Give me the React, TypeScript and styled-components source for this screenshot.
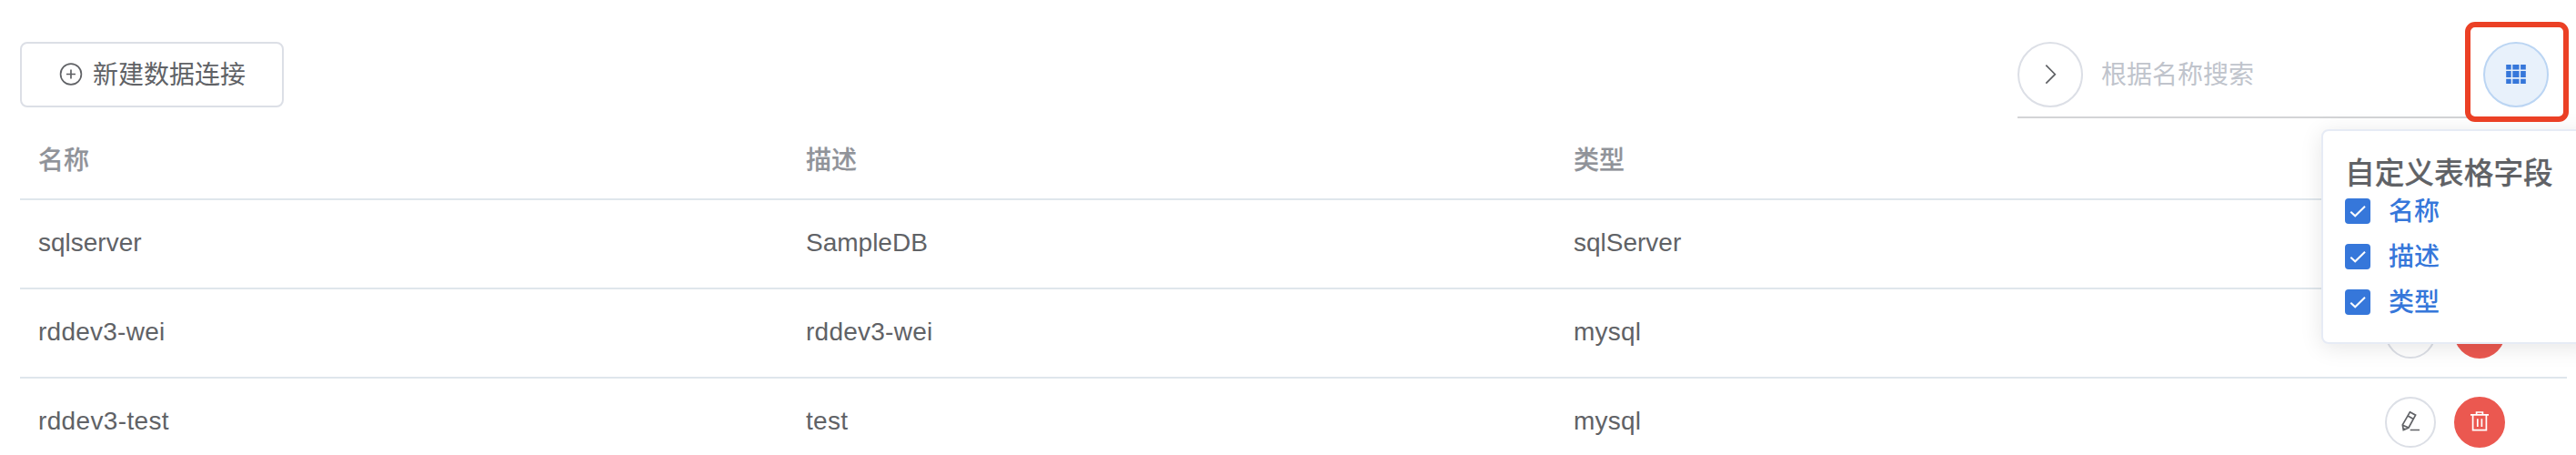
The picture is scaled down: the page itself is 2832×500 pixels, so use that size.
import React from 'react';
import styled, { createGlobalStyle } from 'styled-components';

const GlobalStyle = createGlobalStyle`
  * { box-sizing: border-box; }
  html, body { margin: 0; padding: 0; }
  body {
    height: 500px;
    overflow: hidden;
    background: #fff;
    color: #606266;
    font-family: "Liberation Sans", "Noto Sans CJK SC", sans-serif;
    font-size: 28px;
  }
`;

const Page = styled.main`
  position: relative;
  width: 2832px;
  height: 500px;
  padding: 46px 10px 0 22px;
  overflow: hidden;
`;

const Toolbar = styled.header`
  display: flex;
  justify-content: space-between;
  align-items: flex-start;
  height: 88px;
`;

const CreateButton = styled.button`
  display: flex;
  align-items: center;
  gap: 11px;
  width: 290px;
  height: 72px;
  padding: 0 0 0 41px;
  border: 2px solid #dcdfe6;
  border-radius: 8px;
  background: #fff;
  color: #606266;
  font: inherit;
  line-height: 40px;
  white-space: nowrap;
`;

const ButtonText = styled.span`
  padding-top: 2px;
`;

const SearchBar = styled.div`
  display: flex;
  align-items: flex-start;
  width: 604px;
  height: 84px;
  padding-right: 20px;
  border-bottom: 2px solid #d3d4d6;
`;

const SearchInput = styled.input`
  flex: 1;
  min-width: 0;
  height: 72px;
  padding: 2px 20px 0;
  border: 0;
  outline: 0;
  background: transparent;
  color: #606266;
  font: inherit;
  &::placeholder { color: #c0c4cc; opacity: 1; }
`;

type Tone = 'plain' | 'active' | 'danger';
const tones: Record<Tone, { bg: string; line: string; ink: string }> = {
  plain: { bg: '#fff', line: '#dcdfe6', ink: '#606266' },
  active: { bg: '#e8f1fb', line: '#bbd5f3', ink: '#3677da' },
  danger: { bg: '#eb5850', line: '#eb5850', ink: '#fff' },
};

const RoundButton = styled.button<{ $size: number; $tone: Tone }>`
  display: grid;
  place-items: center;
  flex: none;
  width: ${p => p.$size}px;
  height: ${p => p.$size}px;
  padding: 0;
  border: 2px solid ${p => tones[p.$tone].line};
  border-radius: 50%;
  background: ${p => tones[p.$tone].bg};
  color: ${p => tones[p.$tone].ink};
  svg { display: block; margin: -2px; }
`;

const Highlight = styled.div`
  position: absolute;
  left: 2710px;
  top: 24px;
  width: 114px;
  height: 110px;
  border: 6px solid #eb4025;
  border-radius: 11px;
  pointer-events: none;
`;

const Table = styled.section`
  width: 2800px;
`;

const Row = styled.div<{ $head?: boolean }>`
  display: grid;
  grid-template-columns: repeat(3, 844px) 1fr;
  align-items: center;
  height: ${p => (p.$head ? 86 : 98)}px;
  border-bottom: 2px solid #dfe6ec;
  color: ${p => (p.$head ? '#909399' : '#606266')};
  font-weight: ${p => (p.$head ? 500 : 400)};
`;

const HeadCell = styled.div`
  padding: 2px 20px 0;
  line-height: 46px;
  white-space: nowrap;
  -webkit-text-stroke: 0.2px currentColor;
`;

const Cell = styled.div<{ $tracking: number }>`
  padding: 0 20px 2px;
  letter-spacing: ${p => p.$tracking}px;
  line-height: 46px;
  white-space: nowrap;
`;

const Actions = styled.div`
  display: flex;
  justify-content: center;
  gap: 20px;
`;

const Popover = styled.aside`
  position: absolute;
  left: 2552px;
  top: 142px;
  width: 300px;
  height: 236px;
  padding: 25px 24px 0;
  border: 2px solid #e6ebf5;
  border-radius: 8px;
  background: #fff;
  box-shadow: 0 4px 24px rgba(0, 0, 0, 0.1);
`;

const PopoverTitle = styled.h2`
  margin: 0;
  height: 44px;
  font-size: 32.7px;
  font-weight: 500;
  line-height: 44px;
  white-space: nowrap;
  -webkit-text-stroke: 0.2px currentColor;
`;

const OptionList = styled.div`
  margin-top: -6px;
`;

const Option = styled.label`
  display: flex;
  align-items: center;
  gap: 20px;
  height: 50px;
  color: #3677da;
  font-weight: 500;
  line-height: 40px;
`;

const OptionText = styled.span`
  padding-top: 2px;
`;

const CheckBox = styled.span`
  width: 28px;
  height: 28px;
  border-radius: 4px;
  background: #3677da;
  color: #fff;
  svg { display: block; }
`;

const Icon = ({ size, width = 1.7, d }: { size: number; width?: number; d: string }) => (
  <svg width={size} height={size} viewBox={`0 0 ${size} ${size}`} fill="none" stroke="currentColor" strokeWidth={width}>
    <path d={d} />
  </svg>
);

const PlusIcon = () => (
  <svg width="26" height="26" viewBox="0 0 26 26" fill="none" stroke="currentColor" strokeWidth="1.7">
    <circle cx="13" cy="12.5" r="11.4" />
    <path d="M8 12.5h10M13 7.5v10" />
  </svg>
);

const GridIcon = () => (
  <svg width="72" height="72" viewBox="0 0 72 72" fill="currentColor">
    <path d="M25.2 25h5.5v5.4h-5.5zM32.3 25h7.2v5.4h-7.2zM41.1 25h5.7v5.4h-5.7zM25.2 32.1h5.5v7h-5.5zM32.3 32.1h7.2v7h-7.2zM41.1 32.1h5.7v7h-5.7zM25.2 40.8h5.5v5.2h-5.5zM32.3 40.8h7.2v5.2h-7.2zM41.1 40.8h5.7v5.2h-5.7z" />
  </svg>
);

const EDIT = 'M27.4 16.8L33.6 20.2L26 34L20.3 36.6L19.3 30.8ZM25.2 21L31.3 24.5M19.5 31.2L26 34M20 34.8L22.2 35.8M27.7 36.5H38';
const TRASH = 'M18 19.8H38M24.6 19.8V17H31.4V19.8M20.6 19.8V36.7H35.4V19.8M25.8 24.3V33M30.4 24.3V33';

const fields = ['名称', '描述', '类型'];
const connections = [
  [['sqlserver', 0], ['SampleDB', 0], ['sqlServer', 0]],
  [['rddev3-wei', 0.25], ['rddev3-wei', 0.25], ['mysql', 0.2]],
  [['rddev3-test', 0.35], ['test', 0.3], ['mysql', 0.2]],
] as [string, number][][];

export default function App() {
  return (
    <Page>
      <GlobalStyle />
      <Toolbar>
        <CreateButton>
          <PlusIcon />
          <ButtonText>新建数据连接</ButtonText>
        </CreateButton>
        <SearchBar>
          <RoundButton $size={72} $tone="plain" aria-label="search">
            <Icon size={72} d="M31.3 25.7L41.3 35.7L31.3 45.7" />
          </RoundButton>
          <SearchInput placeholder="根据名称搜索" />
          <RoundButton $size={72} $tone="active" aria-label="columns">
            <GridIcon />
          </RoundButton>
        </SearchBar>
      </Toolbar>
      <Table>
        <Row $head>
          {fields.map(f => <HeadCell key={f}>{f}</HeadCell>)}
        </Row>
        {connections.map((values, r) => (
          <Row key={r}>
            {values.map(([text, tracking], i) => <Cell key={i} $tracking={tracking}>{text}</Cell>)}
            <Actions>
              <RoundButton $size={56} $tone="plain" aria-label="edit">
                <Icon size={56} d={EDIT} />
              </RoundButton>
              <RoundButton $size={56} $tone="danger" aria-label="delete">
                <Icon size={56} d={TRASH} />
              </RoundButton>
            </Actions>
          </Row>
        ))}
      </Table>
      <Popover>
        <PopoverTitle>自定义表格字段</PopoverTitle>
        <OptionList>
          {fields.map(f => (
            <Option key={f}>
              <CheckBox>
                <Icon size={28} width={2} d="M6.3 14.7L11.2 19.3L22 8.7" />
              </CheckBox>
              <OptionText>{f}</OptionText>
            </Option>
          ))}
        </OptionList>
      </Popover>
      <Highlight />
    </Page>
  );
}
